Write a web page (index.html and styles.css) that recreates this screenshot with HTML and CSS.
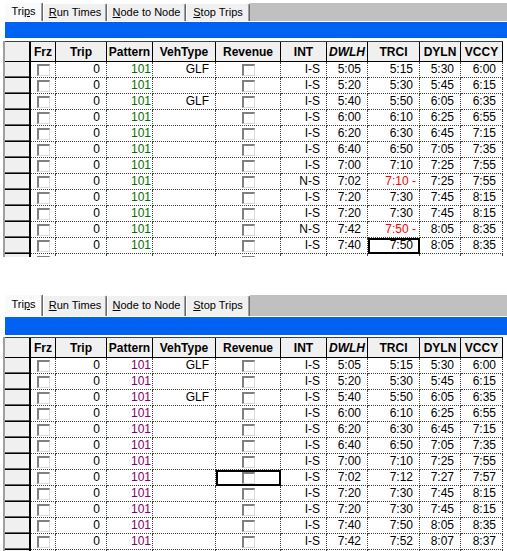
FILE: index.html
```html
<!DOCTYPE html>
<html>
<head>
<meta charset="utf-8">
<link rel="stylesheet" href="styles.css">
</head>
<body>
<div class="panel first">
  <div class="tabs">
    <div class="tab t1 active">Tri<u>p</u>s</div>
    <div class="tab t2"><u>R</u>un Times</div>
    <div class="tab t3"><u>N</u>ode to Node</div>
    <div class="tab t4"><u>S</u>top Trips</div>
    <div class="tabfill"></div>
  </div>
  <div class="blue"></div>
  <div class="grid">
    <div class="hrow">
      <div class="h rh"></div><div class="h frz">Frz</div><div class="h trip">Trip</div><div class="h pat">Pattern</div><div class="h veh">VehType</div><div class="h rev">Revenue</div><div class="h int">INT</div><div class="h dwlh it">DWLH</div><div class="h trci">TRCI</div><div class="h dyln">DYLN</div><div class="h vccy">VCCY</div>
    </div>
    <div class="row"><div class="c rh"></div><div class="c frz"><span class="cb"></span></div><div class="c trip">0</div><div class="c pat g">101</div><div class="c veh">GLF</div><div class="c rev"><span class="cb"></span></div><div class="c int">I-S</div><div class="c dwlh">5:05</div><div class="c trci">5:15</div><div class="c dyln">5:30</div><div class="c vccy">6:00</div></div>
    <div class="row"><div class="c rh"></div><div class="c frz"><span class="cb"></span></div><div class="c trip">0</div><div class="c pat g">101</div><div class="c veh"></div><div class="c rev"><span class="cb"></span></div><div class="c int">I-S</div><div class="c dwlh">5:20</div><div class="c trci">5:30</div><div class="c dyln">5:45</div><div class="c vccy">6:15</div></div>
    <div class="row"><div class="c rh"></div><div class="c frz"><span class="cb"></span></div><div class="c trip">0</div><div class="c pat g">101</div><div class="c veh">GLF</div><div class="c rev"><span class="cb"></span></div><div class="c int">I-S</div><div class="c dwlh">5:40</div><div class="c trci">5:50</div><div class="c dyln">6:05</div><div class="c vccy">6:35</div></div>
    <div class="row"><div class="c rh"></div><div class="c frz"><span class="cb"></span></div><div class="c trip">0</div><div class="c pat g">101</div><div class="c veh"></div><div class="c rev"><span class="cb"></span></div><div class="c int">I-S</div><div class="c dwlh">6:00</div><div class="c trci">6:10</div><div class="c dyln">6:25</div><div class="c vccy">6:55</div></div>
    <div class="row"><div class="c rh"></div><div class="c frz"><span class="cb"></span></div><div class="c trip">0</div><div class="c pat g">101</div><div class="c veh"></div><div class="c rev"><span class="cb"></span></div><div class="c int">I-S</div><div class="c dwlh">6:20</div><div class="c trci">6:30</div><div class="c dyln">6:45</div><div class="c vccy">7:15</div></div>
    <div class="row"><div class="c rh"></div><div class="c frz"><span class="cb"></span></div><div class="c trip">0</div><div class="c pat g">101</div><div class="c veh"></div><div class="c rev"><span class="cb"></span></div><div class="c int">I-S</div><div class="c dwlh">6:40</div><div class="c trci">6:50</div><div class="c dyln">7:05</div><div class="c vccy">7:35</div></div>
    <div class="row"><div class="c rh"></div><div class="c frz"><span class="cb"></span></div><div class="c trip">0</div><div class="c pat g">101</div><div class="c veh"></div><div class="c rev"><span class="cb"></span></div><div class="c int">I-S</div><div class="c dwlh">7:00</div><div class="c trci">7:10</div><div class="c dyln">7:25</div><div class="c vccy">7:55</div></div>
    <div class="row"><div class="c rh"></div><div class="c frz"><span class="cb"></span></div><div class="c trip">0</div><div class="c pat g">101</div><div class="c veh"></div><div class="c rev"><span class="cb"></span></div><div class="c int">N-S</div><div class="c dwlh">7:02</div><div class="c trci red">7:10 -</div><div class="c dyln">7:25</div><div class="c vccy">7:55</div></div>
    <div class="row"><div class="c rh"></div><div class="c frz"><span class="cb"></span></div><div class="c trip">0</div><div class="c pat g">101</div><div class="c veh"></div><div class="c rev"><span class="cb"></span></div><div class="c int">I-S</div><div class="c dwlh">7:20</div><div class="c trci">7:30</div><div class="c dyln">7:45</div><div class="c vccy">8:15</div></div>
    <div class="row"><div class="c rh"></div><div class="c frz"><span class="cb"></span></div><div class="c trip">0</div><div class="c pat g">101</div><div class="c veh"></div><div class="c rev"><span class="cb"></span></div><div class="c int">I-S</div><div class="c dwlh">7:20</div><div class="c trci">7:30</div><div class="c dyln">7:45</div><div class="c vccy">8:15</div></div>
    <div class="row"><div class="c rh"></div><div class="c frz"><span class="cb"></span></div><div class="c trip">0</div><div class="c pat g">101</div><div class="c veh"></div><div class="c rev"><span class="cb"></span></div><div class="c int">N-S</div><div class="c dwlh">7:42</div><div class="c trci red">7:50 -</div><div class="c dyln">8:05</div><div class="c vccy">8:35</div></div>
    <div class="row"><div class="c rh"></div><div class="c frz"><span class="cb"></span></div><div class="c trip">0</div><div class="c pat g">101</div><div class="c veh"></div><div class="c rev"><span class="cb"></span></div><div class="c int">I-S</div><div class="c dwlh">7:40</div><div class="c trci sel">7:50</div><div class="c dyln">8:05</div><div class="c vccy">8:35</div></div>
    <div class="row"><div class="c rh"></div><div class="c frz"><span class="cb"></span></div><div class="c trip"></div><div class="c pat"></div><div class="c veh"></div><div class="c rev"><span class="cb"></span></div><div class="c int"></div><div class="c dwlh"></div><div class="c trci"></div><div class="c dyln"></div><div class="c vccy"></div></div>
  </div>
</div>

<div class="panel second">
  <div class="tabs">
    <div class="tab t1 active">Tri<u>p</u>s</div>
    <div class="tab t2"><u>R</u>un Times</div>
    <div class="tab t3"><u>N</u>ode to Node</div>
    <div class="tab t4"><u>S</u>top Trips</div>
    <div class="tabfill"></div>
  </div>
  <div class="blue"></div>
  <div class="grid">
    <div class="hrow">
      <div class="h rh"></div><div class="h frz">Frz</div><div class="h trip">Trip</div><div class="h pat">Pattern</div><div class="h veh">VehType</div><div class="h rev">Revenue</div><div class="h int">INT</div><div class="h dwlh it">DWLH</div><div class="h trci">TRCI</div><div class="h dyln">DYLN</div><div class="h vccy">VCCY</div>
    </div>
    <div class="row"><div class="c rh"></div><div class="c frz"><span class="cb"></span></div><div class="c trip">0</div><div class="c pat p">101</div><div class="c veh">GLF</div><div class="c rev"><span class="cb"></span></div><div class="c int">I-S</div><div class="c dwlh">5:05</div><div class="c trci">5:15</div><div class="c dyln">5:30</div><div class="c vccy">6:00</div></div>
    <div class="row"><div class="c rh"></div><div class="c frz"><span class="cb"></span></div><div class="c trip">0</div><div class="c pat p">101</div><div class="c veh"></div><div class="c rev"><span class="cb"></span></div><div class="c int">I-S</div><div class="c dwlh">5:20</div><div class="c trci">5:30</div><div class="c dyln">5:45</div><div class="c vccy">6:15</div></div>
    <div class="row"><div class="c rh"></div><div class="c frz"><span class="cb"></span></div><div class="c trip">0</div><div class="c pat p">101</div><div class="c veh">GLF</div><div class="c rev"><span class="cb"></span></div><div class="c int">I-S</div><div class="c dwlh">5:40</div><div class="c trci">5:50</div><div class="c dyln">6:05</div><div class="c vccy">6:35</div></div>
    <div class="row"><div class="c rh"></div><div class="c frz"><span class="cb"></span></div><div class="c trip">0</div><div class="c pat p">101</div><div class="c veh"></div><div class="c rev"><span class="cb"></span></div><div class="c int">I-S</div><div class="c dwlh">6:00</div><div class="c trci">6:10</div><div class="c dyln">6:25</div><div class="c vccy">6:55</div></div>
    <div class="row"><div class="c rh"></div><div class="c frz"><span class="cb"></span></div><div class="c trip">0</div><div class="c pat p">101</div><div class="c veh"></div><div class="c rev"><span class="cb"></span></div><div class="c int">I-S</div><div class="c dwlh">6:20</div><div class="c trci">6:30</div><div class="c dyln">6:45</div><div class="c vccy">7:15</div></div>
    <div class="row"><div class="c rh"></div><div class="c frz"><span class="cb"></span></div><div class="c trip">0</div><div class="c pat p">101</div><div class="c veh"></div><div class="c rev"><span class="cb"></span></div><div class="c int">I-S</div><div class="c dwlh">6:40</div><div class="c trci">6:50</div><div class="c dyln">7:05</div><div class="c vccy">7:35</div></div>
    <div class="row"><div class="c rh"></div><div class="c frz"><span class="cb"></span></div><div class="c trip">0</div><div class="c pat p">101</div><div class="c veh"></div><div class="c rev"><span class="cb"></span></div><div class="c int">I-S</div><div class="c dwlh">7:00</div><div class="c trci">7:10</div><div class="c dyln">7:25</div><div class="c vccy">7:55</div></div>
    <div class="row"><div class="c rh"></div><div class="c frz"><span class="cb"></span></div><div class="c trip">0</div><div class="c pat p">101</div><div class="c veh"></div><div class="c rev sel"><span class="cb"></span></div><div class="c int">I-S</div><div class="c dwlh">7:02</div><div class="c trci">7:12</div><div class="c dyln">7:27</div><div class="c vccy">7:57</div></div>
    <div class="row"><div class="c rh"></div><div class="c frz"><span class="cb"></span></div><div class="c trip">0</div><div class="c pat p">101</div><div class="c veh"></div><div class="c rev"><span class="cb"></span></div><div class="c int">I-S</div><div class="c dwlh">7:20</div><div class="c trci">7:30</div><div class="c dyln">7:45</div><div class="c vccy">8:15</div></div>
    <div class="row"><div class="c rh"></div><div class="c frz"><span class="cb"></span></div><div class="c trip">0</div><div class="c pat p">101</div><div class="c veh"></div><div class="c rev"><span class="cb"></span></div><div class="c int">I-S</div><div class="c dwlh">7:20</div><div class="c trci">7:30</div><div class="c dyln">7:45</div><div class="c vccy">8:15</div></div>
    <div class="row"><div class="c rh"></div><div class="c frz"><span class="cb"></span></div><div class="c trip">0</div><div class="c pat p">101</div><div class="c veh"></div><div class="c rev"><span class="cb"></span></div><div class="c int">I-S</div><div class="c dwlh">7:40</div><div class="c trci">7:50</div><div class="c dyln">8:05</div><div class="c vccy">8:35</div></div>
    <div class="row"><div class="c rh"></div><div class="c frz"><span class="cb"></span></div><div class="c trip">0</div><div class="c pat p">101</div><div class="c veh"></div><div class="c rev"><span class="cb"></span></div><div class="c int">I-S</div><div class="c dwlh">7:42</div><div class="c trci">7:52</div><div class="c dyln">8:07</div><div class="c vccy">8:37</div></div>
    <div class="row"><div class="c rh"></div><div class="c frz"><span class="cb"></span></div><div class="c trip"></div><div class="c pat"></div><div class="c veh"></div><div class="c rev"><span class="cb"></span></div><div class="c int"></div><div class="c dwlh"></div><div class="c trci"></div><div class="c dyln"></div><div class="c vccy"></div></div>
  </div>
</div>
</body>
</html>
```

FILE: styles.css
```css
html, body {
  margin: 0;
  padding: 0;
  background: #fff;
}
body {
  font-family: "Liberation Sans", Arial, sans-serif;
  color: #000;
  width: 507px;
}
.panel {
  overflow: hidden;
}
.panel.first {
  height: 257px;
}
.panel.second {
  margin-top: 35px;
  height: 259px;
}

/* tab strip */
.tabs {
  display: flex;
  box-sizing: border-box;
  height: 22px;
  padding: 3px 0 1px 4px;
}
.second .tabs {
  height: 25px;
  padding: 3px 0 1px 4px;
}
.tab {
  box-sizing: border-box;
  height: 100%;
  background: #f0f0f0;
  border-top: 1px solid #ffffff;
  border-left: 1px solid #ffffff;
  border-right: 1px solid #696969;
  box-shadow: inset -1px 0 0 #a0a0a0;
  border-radius: 2px 2px 0 0;
  font-size: 11px;
  line-height: 16px;
  text-align: center;
  white-space: nowrap;
  flex: none;
}
.second .tab {
  line-height: 19px;
}
.tab.active {
  background: #fafafa;
  margin-top: -1px;
  height: calc(100% + 1px);
}
.tab u {
  text-decoration: underline;
  text-underline-offset: 1px;
}
.t1 { width: 39px; }
.t2 { width: 64px; }
.t3 { width: 79px; }
.t4 { width: 64px; }
.tabfill {
  flex: 1;
  background: #c0c0c0;
}

/* blue bar */
.blue {
  height: 16px;
  margin-left: 5px;
  background: #0062f2;
}
.second .blue {
  height: 18px;
}

/* grid */
.grid {
  margin-top: 3px;
  margin-left: 3px;
  width: 498px;
  border-left: 2px solid #a0a0a0;
}
.second .grid {
  margin-top: 2px;
}
.hrow {
  display: flex;
  box-sizing: border-box;
  height: 21px;
  border-top: 1px solid #404040;
  background: #f0f0f0;
}
.h {
  box-sizing: border-box;
  height: 20px;
  border-right: 1px solid #000;
  border-bottom: 1px solid #000;
  font-size: 12px;
  font-weight: bold;
  line-height: 20px;
  text-align: center;
  white-space: nowrap;
  overflow: hidden;
  flex: none;
}
.h.it {
  font-style: italic;
}
.row {
  display: flex;
  height: 16px;
}
.c {
  box-sizing: border-box;
  height: 16px;
  border-right: 1px dotted #404040;
  border-bottom: 1px dotted #404040;
  padding-right: 6px;
  font-size: 12px;
  line-height: 15px;
  text-align: right;
  white-space: nowrap;
  overflow: hidden;
  flex: none;
}
.c.rh {
  background: #f0f0f0;
  border-right: 2px solid #000;
  border-bottom: 1px solid #000;
  box-shadow: inset 0 -1px 0 #606060;
  padding: 0;
}
.h.rh {
  border-right: 2px solid #000;
}
.c.frz, .c.rev {
  text-align: center;
  padding: 0;
}
.rh { width: 26px; }
.frz { width: 25px; }
.trip { width: 51px; }
.pat { width: 46px; }
.veh { width: 63px; }
.rev { width: 65px; }
.int { width: 46px; }
.dwlh { width: 41px; }
.trci { width: 52px; }
.dyln { width: 41px; }
.vccy { width: 42px; }

.c.pat {
  padding-right: 1px;
}
.g { color: #007000; }
.p { color: #800070; }
.c.red {
  color: #ff0000;
  padding-right: 3px;
}
.sel {
  outline: 2px solid #000;
  outline-offset: -2px;
}

/* classic checkbox */
.cb {
  display: inline-block;
  box-sizing: border-box;
  width: 13px;
  height: 12px;
  margin-top: 2px;
  vertical-align: top;
  background: #fff;
  border-top: 2px solid #808080;
  border-left: 2px solid #808080;
  border-right: 1px solid #dcdcdc;
  border-bottom: 1px solid #dcdcdc;
}
```
